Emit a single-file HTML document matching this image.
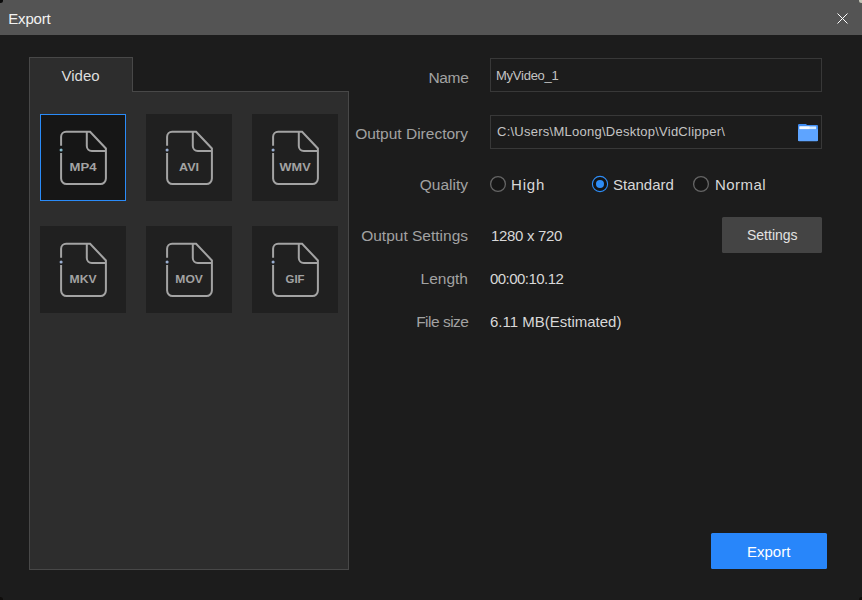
<!DOCTYPE html>
<html><head><meta charset="utf-8">
<style>
*{margin:0;padding:0;box-sizing:border-box}
html,body{width:862px;height:600px;overflow:hidden;background:#1c1c1c;font-family:"Liberation Sans",sans-serif}
.a{position:absolute}
.t{position:absolute;white-space:nowrap;line-height:1}
#title{left:0;top:0;width:862px;height:35px;background:#545454}
#panel{left:29px;top:91px;width:320px;height:479px;background:#2d2d2d;border:1px solid #484848}
#tab{left:29px;top:57px;width:104px;height:35px;background:#2d2d2d;border:1px solid #484848;border-bottom:none}
.tile{position:absolute;width:86px;height:87px;background:#202020}
.tile.sel{background:#161616;border:1px solid #2a8bf8}
.ic{fill:none;stroke:#a3a3a3;stroke-width:2}
.ict{font-family:"Liberation Sans",sans-serif;font-weight:bold;font-size:11px;fill:#a3a3a3}
.lbl{color:#a2a2a2;font-size:15.5px}
.val{color:#d8d8d8;font-size:15px}
.inp{position:absolute;border:1px solid #383838;background:#1c1c1c}
.btn{position:absolute;border-radius:1.5px}
</style></head><body>
<div id="title" class="a"></div>
<div class="t" style="left:8.3px;top:11px;font-size:15px;letter-spacing:-0.2px;color:#f2f2f2">Export</div>
<svg class="a" style="left:836px;top:12px" width="13" height="13" viewBox="0 0 13 13"><path d="M1.5 1.5L11.5 11.5M11.5 1.5L1.5 11.5" stroke="#fff" stroke-width="1"/></svg>

<div id="panel" class="a"></div>
<div id="tab" class="a"></div>
<div class="t" style="left:61.5px;top:68px;font-size:15px;color:#dedede">Video</div>

<div class="tile sel" style="left:40px;top:114px"></div>
<svg class="a" style="left:40px;top:114px" width="86" height="87" viewBox="0 0 86 87"><path class="ic" d="M21.1 31.8V22.7a5 5 0 0 1 5-5H50.1L65.9 34.5V64.6a5.5 5.5 0 0 1-5.5 5.5H26.6a5.5 5.5 0 0 1-5.5-5.5V39"/><path class="ic" d="M46.8 17.7V32.1a5 5 0 0 0 5 5H65.9"/><circle cx="21.1" cy="36" r="1.55" fill="#84b8c8"/><text x="43.1" y="57" text-anchor="middle" textLength="27" lengthAdjust="spacingAndGlyphs" class="ict">MP4</text></svg>
<div class="tile" style="left:146px;top:114px"></div>
<svg class="a" style="left:146px;top:114px" width="86" height="87" viewBox="0 0 86 87"><path class="ic" d="M21.1 31.8V22.7a5 5 0 0 1 5-5H50.1L65.9 34.5V64.6a5.5 5.5 0 0 1-5.5 5.5H26.6a5.5 5.5 0 0 1-5.5-5.5V39"/><path class="ic" d="M46.8 17.7V32.1a5 5 0 0 0 5 5H65.9"/><circle cx="21.1" cy="36" r="1.55" fill="#9aaed0"/><text x="43.1" y="57" text-anchor="middle" textLength="20" lengthAdjust="spacingAndGlyphs" class="ict">AVI</text></svg>
<div class="tile" style="left:252px;top:114px"></div>
<svg class="a" style="left:252px;top:114px" width="86" height="87" viewBox="0 0 86 87"><path class="ic" d="M21.1 31.8V22.7a5 5 0 0 1 5-5H50.1L65.9 34.5V64.6a5.5 5.5 0 0 1-5.5 5.5H26.6a5.5 5.5 0 0 1-5.5-5.5V39"/><path class="ic" d="M46.8 17.7V32.1a5 5 0 0 0 5 5H65.9"/><circle cx="21.1" cy="36" r="1.55" fill="#9aaed0"/><text x="43.1" y="57" text-anchor="middle" textLength="31" lengthAdjust="spacingAndGlyphs" class="ict">WMV</text></svg>
<div class="tile" style="left:40px;top:226px"></div>
<svg class="a" style="left:40px;top:226px" width="86" height="87" viewBox="0 0 86 87"><path class="ic" d="M21.1 31.8V22.7a5 5 0 0 1 5-5H50.1L65.9 34.5V64.6a5.5 5.5 0 0 1-5.5 5.5H26.6a5.5 5.5 0 0 1-5.5-5.5V39"/><path class="ic" d="M46.8 17.7V32.1a5 5 0 0 0 5 5H65.9"/><circle cx="21.1" cy="36" r="1.55" fill="#9aaed0"/><text x="43.1" y="57" text-anchor="middle" textLength="27" lengthAdjust="spacingAndGlyphs" class="ict">MKV</text></svg>
<div class="tile" style="left:146px;top:226px"></div>
<svg class="a" style="left:146px;top:226px" width="86" height="87" viewBox="0 0 86 87"><path class="ic" d="M21.1 31.8V22.7a5 5 0 0 1 5-5H50.1L65.9 34.5V64.6a5.5 5.5 0 0 1-5.5 5.5H26.6a5.5 5.5 0 0 1-5.5-5.5V39"/><path class="ic" d="M46.8 17.7V32.1a5 5 0 0 0 5 5H65.9"/><circle cx="21.1" cy="36" r="1.55" fill="#9aaed0"/><text x="43.1" y="57" text-anchor="middle" textLength="27.5" lengthAdjust="spacingAndGlyphs" class="ict">MOV</text></svg>
<div class="tile" style="left:252px;top:226px"></div>
<svg class="a" style="left:252px;top:226px" width="86" height="87" viewBox="0 0 86 87"><path class="ic" d="M21.1 31.8V22.7a5 5 0 0 1 5-5H50.1L65.9 34.5V64.6a5.5 5.5 0 0 1-5.5 5.5H26.6a5.5 5.5 0 0 1-5.5-5.5V39"/><path class="ic" d="M46.8 17.7V32.1a5 5 0 0 0 5 5H65.9"/><circle cx="21.1" cy="36" r="1.55" fill="#9aaed0"/><text x="43.1" y="57" text-anchor="middle" textLength="19" lengthAdjust="spacingAndGlyphs" class="ict">GIF</text></svg>

<div class="t lbl" style="right:393.6px;top:70px;letter-spacing:-0.35px">Name</div>
<div class="t lbl" style="right:394px;top:126px">Output Directory</div>
<div class="t lbl" style="right:394px;top:177px">Quality</div>
<div class="t lbl" style="right:394px;top:228px">Output Settings</div>
<div class="t lbl" style="right:394px;top:271px">Length</div>
<div class="t lbl" style="right:393.5px;top:314px;letter-spacing:-0.5px">File size</div>

<div class="inp" style="left:490px;top:58px;width:332px;height:34px"></div>
<div class="t" style="left:496px;top:69px;font-size:13px;letter-spacing:-0.25px;color:#c4c4c4">MyVideo_1</div>
<div class="inp" style="left:490px;top:115px;width:332px;height:34px"></div>
<div class="t" style="left:497px;top:125px;font-size:13px;letter-spacing:0.25px;color:#c4c4c4">C:\Users\MLoong\Desktop\VidClipper\</div>

<svg class="a" style="left:797px;top:123px" width="23" height="20" viewBox="0 0 23 20"><path d="M1 2.2a1.2 1.2 0 0 1 1.2-1.2H9l1 1H20a1 1 0 0 1 1 1V17a1 1 0 0 1-1 1H2a1 1 0 0 1-1-1Z" fill="#3f8cf2"/><path d="M2.5 3.4H19.2V6.4H2.5Z" fill="#d2e8ff"/><path d="M2.5 3.4H12.6V6.4H2.5Z" fill="#f4f9ff"/><path d="M1 6.2H21V17a1.2 1.2 0 0 1-1.2 1.2H2.2A1.2 1.2 0 0 1 1 17Z" fill="#5ea4ff"/></svg>
<svg class="a" style="left:488px;top:174px" width="20" height="20" viewBox="0 0 20 20"><circle cx="10" cy="10" r="7.4" fill="#161616" stroke="#656565" stroke-width="1.3"/></svg>
<div class="t val" style="left:511px;top:177px;letter-spacing:0.8px">High</div>
<svg class="a" style="left:590px;top:174px" width="20" height="20" viewBox="0 0 20 20"><circle cx="10" cy="10" r="7.6" fill="#141414" stroke="#2e8cf5" stroke-width="1.1"/><circle cx="10" cy="10" r="4" fill="#2e8cf5"/></svg>
<div class="t val" style="left:613px;top:177px">Standard</div>
<svg class="a" style="left:691px;top:174px" width="20" height="20" viewBox="0 0 20 20"><circle cx="10" cy="10" r="7.4" fill="#161616" stroke="#656565" stroke-width="1.3"/></svg>
<div class="t val" style="left:715px;top:177px;letter-spacing:0.45px">Normal</div>

<div class="t val" style="left:491px;top:228px;letter-spacing:-0.33px">1280 x 720</div>
<div class="t val" style="left:490px;top:271px;letter-spacing:-0.54px">00:00:10.12</div>
<div class="t val" style="left:490px;top:314px">6.11 MB(Estimated)</div>

<div class="btn" style="left:722px;top:217px;width:100px;height:36px;background:#444444"></div>
<div class="t" style="left:747px;top:228px;font-size:14px;color:#e2e2e2">Settings</div>

<div class="btn" style="left:711px;top:533px;width:116px;height:36px;background:#2886fa"></div>
<div class="t" style="left:747px;top:544px;font-size:15px;color:#ffffff">Export</div>
<div class="a" style="left:-2px;top:-2px;width:5px;height:5px;border-radius:50%;background:#0a0a0a"></div>
<div class="a" style="left:859px;top:-2px;width:5px;height:5px;border-radius:50%;background:#c2c4b6"></div>
<div class="a" style="left:-2px;top:597px;width:5px;height:5px;border-radius:50%;background:#100e0c"></div>
<div class="a" style="left:859px;top:597px;width:5px;height:5px;border-radius:50%;background:#100e0c"></div>
</body></html>
